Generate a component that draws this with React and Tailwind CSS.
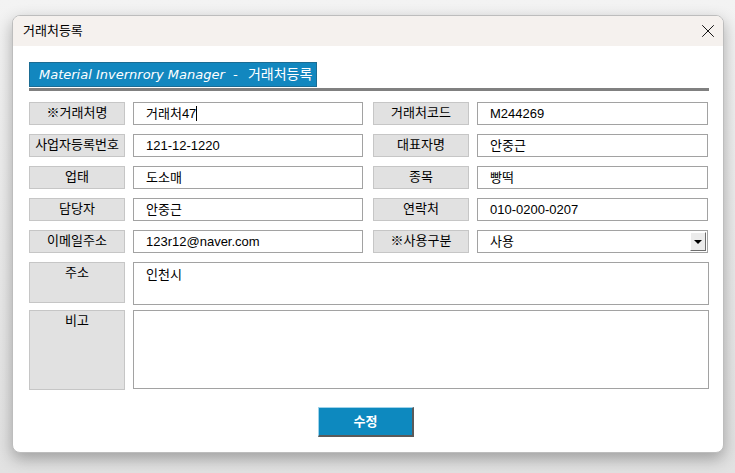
import React from "react";
import { X } from "lucide-react";

const font = { fontFamily: '"Liberation Sans", "Noto Sans CJK KR", sans-serif' };

function Label({ children, className = "" }) {
    return (
        <div className={`w-[96px] shrink-0 bg-[#e1e1e1] border border-[#c6c6c6] text-center text-[13px] leading-[19px] text-black ${className}`}>
            {children}
        </div>
    );
}

function Field({ children, className = "" }) {
    return (
        <div className={`border border-[#a2a2a2] bg-white pl-[12px] text-[13px] leading-[21px] text-black ${className}`}>
            {children}
        </div>
    );
}

function Row({ left, right }) {
    return (
        <div className="flex h-[23px]">
            <Label className="h-[23px]">{left[0]}</Label>
            <Field className="ml-[8px] w-[230px] h-[23px]">{left[1]}</Field>
            <Label className="ml-[10px] h-[23px]">{right[0]}</Label>
            <Field className="ml-[8px] w-[231px] h-[23px] relative">
                {right[1]}
                {right[2] && (
                    <span className="absolute right-[1px] top-[1px] w-[16px] h-[19px] bg-[#ececec] border-r border-b border-[#6e6e6e] border-t border-l border-t-white border-l-white flex items-center justify-center">
                        <span className="block w-0 h-0 border-l-[4px] border-r-[4px] border-t-[4px] border-l-transparent border-r-transparent border-t-black" />
                    </span>
                )}
            </Field>
        </div>
    );
}

export default function App() {
    const rows = [
        [["※거래처명", <>거래처47<span className="inline-block w-[1px] h-[15px] bg-black align-[-3px]" /></>], ["거래처코드", "M244269"]],
        [["사업자등록번호", "121-12-1220"], ["대표자명", "안중근"]],
        [["업태", "도소매"], ["종목", "빵떡"]],
        [["담당자", "안중근"], ["연락처", "010-0200-0207"]],
        [["이메일주소", "123r12@naver.com"], ["※사용구분", "사용", true]],
    ];

    return (
        <div className="w-[735px] h-[473px] bg-gradient-to-b from-[#f3f3f3] to-[#e2e2e2] pt-[15px] pl-[12px]" style={font}>
            <div className="w-[712px] h-[438px] rounded-[8px] border border-[#bdbdbd] bg-white shadow-[0_6px_16px_rgba(0,0,0,0.3)] overflow-hidden flex flex-col">
                {/* title bar */}
                <div className="h-[30px] bg-[#f5f1ee] flex items-center justify-between pl-[10px] pr-[4px] shrink-0">
                    <span className="text-[13px] text-black">거래처등록</span>
                    <X size={22} strokeWidth={1} className="text-black" />
                </div>

                {/* body */}
                <div className="flex-1 pt-[16px] pl-[16px] pr-[14px]">
                    <div className="h-[25px] w-[288px] bg-[#1287bf] border border-[#1b6c93] flex items-center pl-[9px] text-white text-[14px]">
                        <span className="italic" style={{ fontFamily: '"DejaVu Sans", sans-serif', fontSize: "13px" }}>Material Invernrory Manager&nbsp;&nbsp;-&nbsp;&nbsp;</span>
                        <span className="ml-[2px]">거래처등록</span>
                    </div>
                    <div className="h-[3px] bg-[#808080] mt-[1px] w-[680px]" />

                    <div className="mt-[11px] flex flex-col gap-[9px]">
                        {rows.map((r, i) => (
                            <Row key={i} left={r[0]} right={r[1]} />
                        ))}

                        <div className="flex">
                            <Label className="h-[41px]">주소</Label>
                            <Field className="ml-[8px] w-[576px] h-[43px] pt-[1px]">인천시</Field>
                        </div>
                        <div className="flex -mt-[4px]">
                            <Label className="h-[80px]">비고</Label>
                            <Field className="ml-[8px] w-[576px] h-[79px]" />
                        </div>
                    </div>

                    <div className="mt-[17px] flex pl-[289px]">
                        <button className="w-[96px] h-[30px] bg-[#0d89bf] border-t border-l border-t-[#9fd3ea] border-l-[#9fd3ea] border-b-2 border-r-2 border-b-[#5a5a5a] border-r-[#5a5a5a] text-white text-[13px] font-bold">
                            수정
                        </button>
                    </div>
                </div>
            </div>
        </div>
    );
}
